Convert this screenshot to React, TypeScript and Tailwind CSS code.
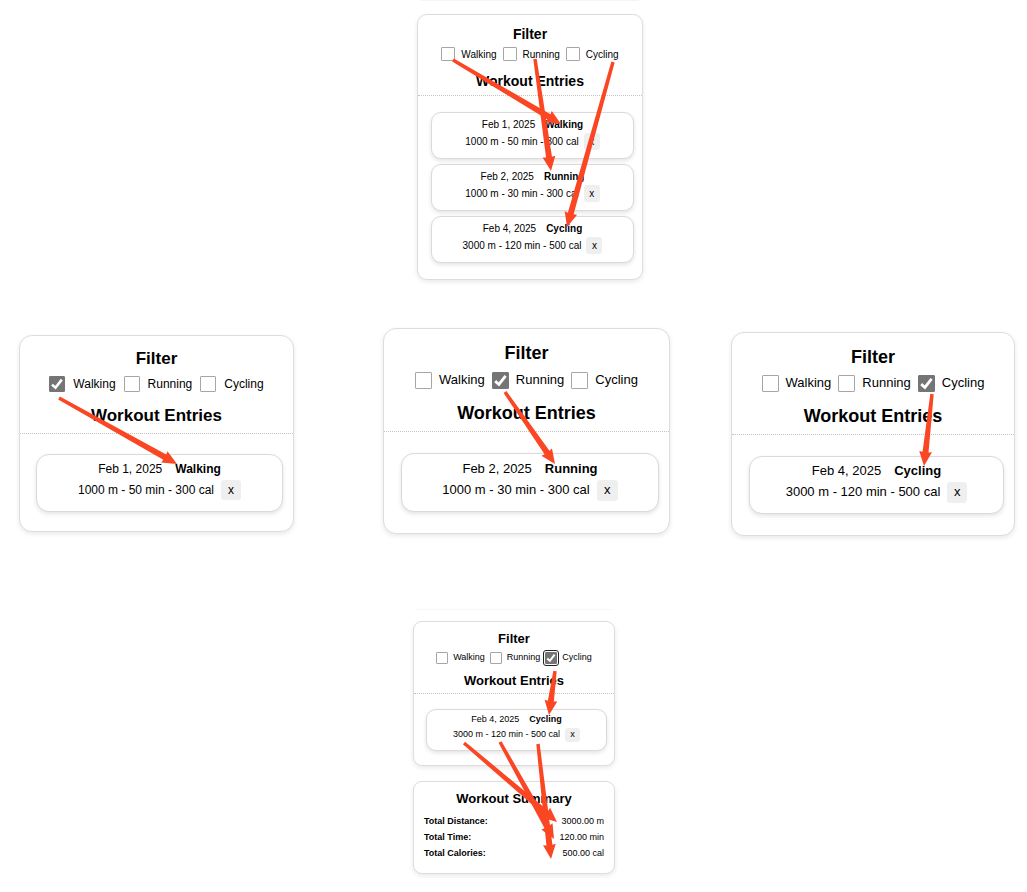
import { useId } from "react";

type Activity = "Walking" | "Running" | "Cycling";

interface Entry {
  date: string;
  type: Activity;
  detail: string;
}

interface PanelStyle {
  panel: string;
  title: string;
  filters: string;
  label: string;
  box: string;
  heading: string;
  list: string;
  card: string;
  lineOne: string;
  lineTwo: string;
  remove: string;
}

type Point = [number, number];

const activities: Activity[] = ["Walking", "Running", "Cycling"];

const walk: Entry = { date: "Feb 1, 2025", type: "Walking", detail: "1000 m - 50 min - 300 cal" };
const run: Entry = { date: "Feb 2, 2025", type: "Running", detail: "1000 m - 30 min - 300 cal" };
const ride: Entry = { date: "Feb 4, 2025", type: "Cycling", detail: "3000 m - 120 min - 500 cal" };

const overview: PanelStyle = {
  panel: "rounded-[10px] pt-[9px] pb-4",
  title: "text-sm leading-5",
  filters: "mt-[3px] h-3.5 gap-1.5 text-[10px]",
  label: "gap-1.5",
  box: "size-3.5",
  heading: "mt-2.5 pb-1 text-sm leading-5",
  list: "mt-4 ml-[13px] mr-2 gap-[5px]",
  card: "rounded-[10px] pt-1 pb-2 text-[10px]",
  lineOne: "h-[15px] gap-2.5",
  lineTwo: "h-[18px] gap-[5px]",
  remove: "h-[17px] w-4 text-[10px]",
};

const small: PanelStyle = {
  panel: "rounded-[13px] pt-[11px] pb-[19px]",
  title: "text-[17px] leading-6",
  filters: "mt-1 h-[18px] gap-2 text-[12px]",
  label: "gap-2",
  box: "size-4",
  heading: "mt-[11px] pb-[5px] text-[17px] leading-6",
  list: "mt-5 ml-4 mr-2.5",
  card: "rounded-[13px] pt-1 pb-[11px] text-[12px]",
  lineOne: "h-5 gap-[13px]",
  lineTwo: "h-[21px] gap-[7px]",
  remove: "size-5 text-[12px]",
};

const large: PanelStyle = {
  panel: "rounded-[13px] pt-3 pb-[21px]",
  title: "text-lg leading-6",
  filters: "mt-1.5 h-[18px] gap-[7px] text-[13px]",
  label: "gap-[7px]",
  box: "size-[17px]",
  heading: "mt-3 pb-1.5 text-lg leading-6",
  list: "mt-[21px] ml-[17px] mr-2.5",
  card: "rounded-[13px] pt-1 pb-2.5 text-[13px]",
  lineOne: "h-[21px] gap-[13px]",
  lineTwo: "h-[22px] gap-[7px]",
  remove: "size-[21px] text-[13px]",
};

const medium: PanelStyle = {
  ...large,
  filters: "mt-[5px] h-[18px] gap-[7px] text-[13px]",
  lineOne: "h-5 gap-[13px]",
  remove: "h-[21px] w-5 text-[13px]",
};

const compact: PanelStyle = {
  panel: "rounded-[9px] pt-2 pb-3.5",
  title: "text-[13px] leading-[18px]",
  filters: "mt-[3px] h-3.5 gap-[5px] text-[9px]",
  label: "gap-[5px]",
  box: "size-3",
  heading: "mt-[7px] pb-[3px] text-[13px] leading-[18px]",
  list: "mt-[15px] ml-3 mr-[7px]",
  card: "rounded-[10px] pt-[3px] pb-2 text-[9px]",
  lineOne: "h-3.5 gap-2.5",
  lineTwo: "h-[15px] gap-[5px]",
  remove: "h-3.5 w-[15px] text-[9px]",
};

function Arrow({ from, to }: { from: Point; to: Point }) {
  const dx = to[0] - from[0];
  const dy = to[1] - from[1];
  const length = Math.hypot(dx, dy);
  const ux = dx / length;
  const uy = dy / length;
  const at = (along: number, side: number) =>
    `${from[0] + ux * along - uy * side},${from[1] + uy * along + ux * side}`;
  const neck = length - 14;
  const points = [
    at(0, 1.7),
    at(neck, 3),
    at(neck - 0.5, 6.4),
    at(length, 0),
    at(neck - 0.5, -6.4),
    at(neck, -3),
    at(0, -1.7),
  ].join(" ");
  return <polygon points={points} fill="#fa4622" />;
}

function Arrows({ width, height, items }: { width: number; height: number; items: [Point, Point][] }) {
  return (
    <svg
      aria-hidden="true"
      viewBox={`0 0 ${width} ${height}`}
      preserveAspectRatio="xMidYMin meet"
      className="pointer-events-none absolute inset-0 h-full w-full overflow-visible"
    >
      {items.map(([from, to], i) => (
        <Arrow key={i} from={from} to={to} />
      ))}
    </svg>
  );
}

function FilterOption({
  name,
  checked,
  outlined,
  style,
}: {
  name: Activity;
  checked: boolean;
  outlined: boolean;
  style: PanelStyle;
}) {
  const id = useId();
  return (
    <div className={`flex items-center ${style.label}`}>
      <span className={`grid shrink-0 ${style.box}`}>
        <input
          id={id}
          type="checkbox"
          defaultChecked={checked}
          className={`peer col-start-1 row-start-1 h-full w-full appearance-none rounded-[1px] border border-[#a6a6a6] bg-white checked:border-[#757575] checked:bg-[#757575] ${
            outlined ? "outline-1 outline-offset-1 outline-[#222222]" : ""
          }`}
        />
        <svg
          viewBox="0 0 16 16"
          aria-hidden="true"
          className="pointer-events-none invisible col-start-1 row-start-1 h-full w-full peer-checked:visible"
        >
          <path d="M3 8.6 6.5 11.7 12.8 3.6" fill="none" stroke="#fff" strokeWidth="2.6" />
        </svg>
      </span>
      <label htmlFor={id}>{name}</label>
    </div>
  );
}

function WorkoutPanel({
  style,
  selected,
  outlined = false,
  entries,
}: {
  style: PanelStyle;
  selected?: Activity;
  outlined?: boolean;
  entries: Entry[];
}) {
  return (
    <section className={`border border-[#dddddd] bg-white shadow-[0_2px_5px_rgba(0,0,0,0.09)] ${style.panel}`}>
      <h2 className={`text-center font-bold ${style.title}`}>Filter</h2>
      <div className={`flex items-center justify-center whitespace-nowrap ${style.filters}`}>
        {activities.map((name) => (
          <FilterOption
            key={name}
            name={name}
            checked={name === selected}
            outlined={outlined && name === selected}
            style={style}
          />
        ))}
      </div>
      <h2 className={`border-b border-dotted border-[#c4c4c4] text-center font-bold ${style.heading}`}>
        Workout Entries
      </h2>
      <ul className={`flex flex-col ${style.list}`}>
        {entries.map((entry) => (
          <li
            key={entry.date}
            className={`whitespace-nowrap border border-[#dadada] bg-white shadow-[0_2px_4px_rgba(0,0,0,0.11)] ${style.card}`}
          >
            <div className={`flex items-center justify-center ${style.lineOne}`}>
              <span>{entry.date}</span>
              <strong>{entry.type}</strong>
            </div>
            <div className={`flex items-center justify-center ${style.lineTwo}`}>
              <span>{entry.detail}</span>
              <button type="button" className={`flex items-center justify-center rounded-[3px] bg-[#efefef] ${style.remove}`}>
                x
              </button>
            </div>
          </li>
        ))}
      </ul>
    </section>
  );
}

function Summary() {
  const rows = [
    ["Total Distance:", "3000.00 m"],
    ["Total Time:", "120.00 min"],
    ["Total Calories:", "500.00 cal"],
  ];
  return (
    <section className="rounded-[9px] border border-[#dddddd] bg-white px-2.5 pt-2 pb-3 shadow-[0_2px_5px_rgba(0,0,0,0.09)]">
      <h2 className="text-center text-[13px] leading-[18px] font-bold">Workout Summary</h2>
      <dl className="mt-[5px] text-[9px] leading-4">
        {rows.map(([name, value]) => (
          <div key={name} className="flex justify-between">
            <dt className="font-bold">{name}</dt>
            <dd>{value}</dd>
          </div>
        ))}
      </dl>
    </section>
  );
}

export default function App() {
  return (
    <main className="min-h-screen overflow-hidden bg-white pb-4 font-['Liberation_Sans',Arial,sans-serif] text-black">
      <div className="grid grid-cols-[417fr_226fr_384fr]">
        <div className="col-start-2 mx-1 h-px bg-[#f4f4f4]" />
        <div className="relative col-start-2 mt-[13px]">
          <WorkoutPanel style={overview} entries={[walk, run, ride]} />
          <Arrows
            width={226}
            height={266}
            items={[
              [[36, 46], [144, 110]],
              [[118, 45], [134, 157]],
              [[196, 48], [150, 213]],
            ]}
          />
        </div>
      </div>

      <div className="mt-12 grid grid-cols-[19fr_275fr_89fr_287fr_61fr_284fr_12fr] items-start">
        <div className="relative col-start-2 mt-[7px]">
          <WorkoutPanel style={small} selected="Walking" entries={[walk]} />
          <Arrows width={275} height={197} items={[[[40, 63], [158, 129]]]} />
        </div>
        <div className="relative col-start-4">
          <WorkoutPanel style={large} selected="Running" entries={[run]} />
          <Arrows width={287} height={206} items={[[[122, 64], [172, 136]]]} />
        </div>
        <div className="relative col-start-6 mt-1">
          <WorkoutPanel style={medium} selected="Cycling" entries={[ride]} />
          <Arrows width={284} height={204} items={[[[201, 62], [193, 134]]]} />
        </div>
      </div>

      <div className="mt-[73px] grid grid-cols-[413fr_202fr_412fr]">
        <div className="col-start-2 mx-0.5 h-px bg-[#f8f8f8]" />
        <div className="relative col-start-2 mt-[11px] flex flex-col gap-[15px]">
          <WorkoutPanel style={compact} selected="Cycling" outlined entries={[ride]} />
          <Summary />
          <Arrows
            width={202}
            height={253}
            items={[
              [[142, 50], [136, 94]],
              [[51, 122], [144, 201]],
              [[87, 121], [141, 218]],
              [[125, 123], [138, 238]],
            ]}
          />
        </div>
      </div>
    </main>
  );
}
